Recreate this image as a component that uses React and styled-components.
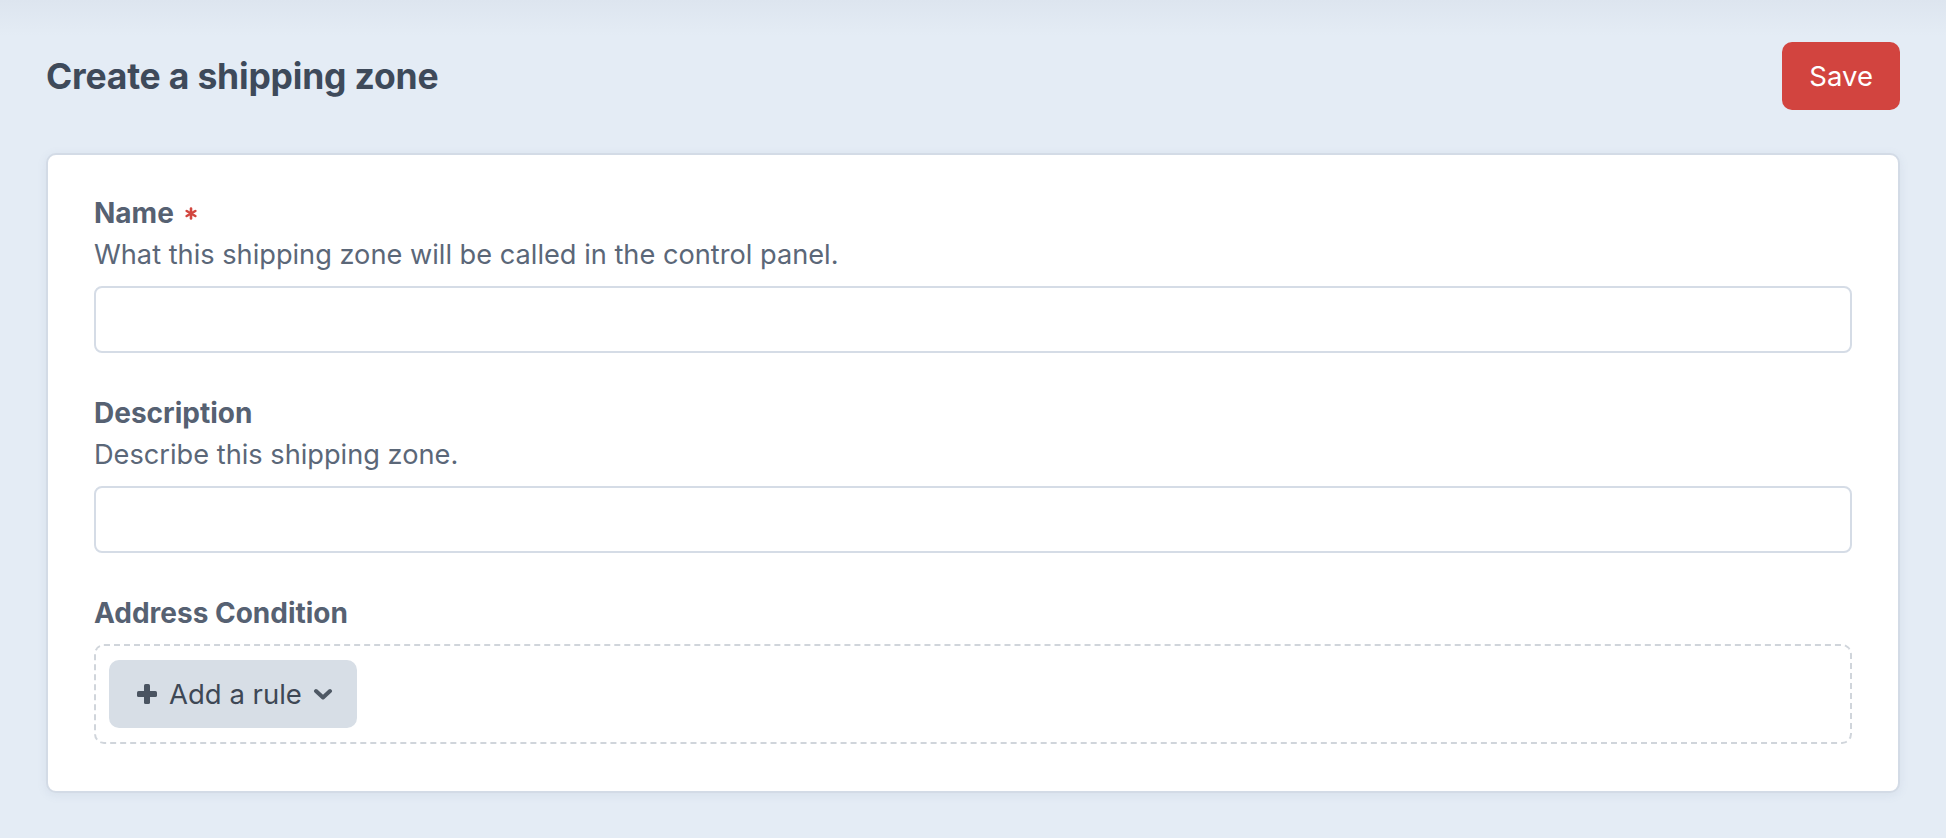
import React from "react";
import styled, { createGlobalStyle } from "styled-components";

const GlobalStyle = createGlobalStyle`
  html, body {
    margin: 0;
    padding: 0;
  }
  body {
    background: #e4ecf5;
    font-family: Inter, "Noto Sans", "Liberation Sans", sans-serif;
    color: #5a6575;
  }
  * {
    box-sizing: border-box;
  }
`;

const Page = styled.div`
  min-height: 838px;
  padding: 42px 46px 40px;
  background: linear-gradient(#dde5ef 0, #e4ecf5 36px);
`;

const Header = styled.header`
  display: flex;
  align-items: center;
  justify-content: space-between;
  height: 68px;
  margin-bottom: 43px;
`;

const Title = styled.h1`
  margin: 0;
  font-size: 35.5px;
  font-weight: 700;
  color: #3e4a5a;
  letter-spacing: -0.2px;
`;

const SaveButton = styled.button`
  height: 68px;
  padding: 0 27px;
  border: none;
  border-radius: 10px;
  background: #d2443f;
  color: #fff;
  font-family: inherit;
  font-size: 27.5px;
  cursor: pointer;
`;

const Card = styled.section`
  background: #fff;
  border: 2px solid #d3dbe6;
  border-radius: 10px;
  box-shadow: 0 2px 10px rgba(120, 140, 170, 0.12);
  padding: 37px 46px 47px;
  display: flex;
  flex-direction: column;
  gap: 39px;
`;

const Field = styled.div`
  display: flex;
  flex-direction: column;
`;

const Label = styled.label`
  display: flex;
  align-items: center;
  gap: 11px;
  font-size: 28px;
  line-height: 42px;
  font-weight: 700;
  color: #566172;
`;

const Hint = styled.p`
  margin: 0;
  font-size: 27.2px;
  line-height: 42px;
  color: #5b6778;
`;

const Input = styled.input`
  margin-top: 10px;
  height: 67px;
  border: 2px solid #d5dce6;
  border-radius: 8px;
  background: #fff;
  font-family: inherit;
  font-size: 28px;
  padding: 0 18px;
  outline: none;
`;

const RuleBox = styled.div`
  margin-top: 10px;
  border: 2px dashed #d0d5db;
  border-radius: 10px;
  padding: 14px 13px 14px;
  display: flex;
`;

const RuleButton = styled.button`
  display: flex;
  align-items: center;
  gap: 11px;
  height: 68px;
  padding: 0 24px 0 27px;
  border: none;
  border-radius: 10px;
  background: #d7dee6;
  color: #3e4855;
  font-family: inherit;
  font-size: 27.5px;
  cursor: pointer;
`;

function Asterisk() {
  return (
    <svg width="12" height="13" viewBox="0 0 12 13" aria-hidden="true">
      <g stroke="#d2463f" strokeWidth="2.6" strokeLinecap="round">
        <line x1="6" y1="1.5" x2="6" y2="11.5" />
        <line x1="1.7" y1="4" x2="10.3" y2="9" />
        <line x1="1.7" y1="9" x2="10.3" y2="4" />
      </g>
    </svg>
  );
}

function PlusIcon() {
  return (
    <svg width="22" height="22" viewBox="0 0 22 22" aria-hidden="true">
      <g fill="#4a5461">
        <rect x="8" y="1" width="6" height="20" rx="1.6" />
        <rect x="1" y="8" width="20" height="6" rx="1.6" />
      </g>
    </svg>
  );
}

function ChevronIcon() {
  return (
    <svg width="20" height="12" viewBox="0 0 20 12" aria-hidden="true">
      <polyline
        points="3,3 10,9.5 17,3"
        fill="none"
        stroke="#4f5965"
        strokeWidth="4"
        strokeLinecap="round"
        strokeLinejoin="round"
      />
    </svg>
  );
}

export default function App() {
  return (
    <Page>
      <GlobalStyle />
      <Header>
        <Title>Create a shipping zone</Title>
        <SaveButton>Save</SaveButton>
      </Header>
      <Card>
        <Field>
          <Label>
            Name <Asterisk />
          </Label>
          <Hint>What this shipping zone will be called in the control panel.</Hint>
          <Input type="text" />
        </Field>
        <Field>
          <Label>Description</Label>
          <Hint>Describe this shipping zone.</Hint>
          <Input type="text" />
        </Field>
        <Field>
          <Label>Address Condition</Label>
          <RuleBox>
            <RuleButton>
              <PlusIcon />
              Add a rule
              <ChevronIcon />
            </RuleButton>
          </RuleBox>
        </Field>
      </Card>
    </Page>
  );
}
